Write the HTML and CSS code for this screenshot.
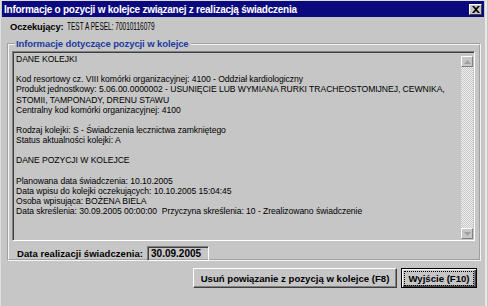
FILE: index.html
```
<!DOCTYPE html>
<html>
<head>
<meta charset="utf-8">
<link rel="stylesheet" href="styles.css">
</head>
<body>
<div class="window">
  <div class="titlebar">
    <span class="title">Informacje o pozycji w kolejce związanej z realizacją świadczenia</span>
    <span class="close"><svg width="8" height="7" viewBox="0 0 8 7"><path d="M0 0h2l2 2 2-2h2L5 3.5 8 7H6L4 5 2 7H0l3-3.5z" fill="#000"/></svg></span>
  </div>
  <div class="content">
    <div class="patient"><b class="plabel">Oczekujący:</b><span class="pvalue">TEST A PESEL: 70010116079</span></div>
    <fieldset class="group">
      <legend class="legend">Informacje dotyczące pozycji w kolejce</legend>
      <div class="memo">
        <div class="memo-text">
          <div class="ln">DANE KOLEJKI</div>
          <div class="ln"></div>
          <div class="ln">Kod resortowy cz. VIII komórki organizacyjnej: 4100 - Oddział kardiologiczny</div>
          <div class="ln">Produkt jednostkowy: 5.06.00.0000002 - USUNIĘCIE LUB WYMIANA RURKI TRACHEOSTOMIJNEJ, CEWNIKA,</div>
          <div class="ln">STOMII, TAMPONADY, DRENU STAWU</div>
          <div class="ln">Centralny kod komórki organizacyjnej: 4100</div>
          <div class="ln"></div>
          <div class="ln">Rodzaj kolejki: S - Świadczenia lecznictwa zamkniętego</div>
          <div class="ln">Status aktualności kolejki: A</div>
          <div class="ln"></div>
          <div class="ln">DANE POZYCJI W KOLEJCE</div>
          <div class="ln"></div>
          <div class="ln">Planowana data świadczenia: 10.10.2005</div>
          <div class="ln">Data wpisu do kolejki oczekujących: 10.10.2005 15:04:45</div>
          <div class="ln">Osoba wpisująca: BOŻENA BIELA</div>
          <div class="ln">Data skreślenia: 30.09.2005 00:00:00&nbsp; Przyczyna skreślenia: 10 - Zrealizowano świadczenie</div>
        </div>
        <div class="scrollbar">
          <div class="sbtn"><svg width="7" height="4" viewBox="0 0 7 4"><path d="M3.5 0L7 4H0z" fill="#a0a0a0"/></svg></div>
          <div class="track"></div>
          <div class="sbtn"><svg width="7" height="4" viewBox="0 0 7 4"><path d="M0 0h7L3.5 4z" fill="#a0a0a0"/></svg></div>
        </div>
      </div>
      <div class="daterow">
        <span class="datelabel">Data realizacji świadczenia:</span>
        <span class="datebox">30.09.2005</span>
      </div>
    </fieldset>
    <div class="buttons">
      <div class="btn">Usuń powiązanie z pozycją w kolejce (F8)</div>
      <div class="btn default"><span class="focus">Wyjście (F10)</span></div>
    </div>
  </div>
</div>
</body>
</html>
```
FILE: styles.css
```
* { box-sizing: border-box; }
html, body { margin: 0; padding: 0; }
body {
  width: 488px;
  height: 306px;
  background: #c6c6c6;
  font-family: "Liberation Sans", Arial, sans-serif;
  overflow: hidden;
}
.window {
  width: 487px;
  height: 306px;
  background: #c6c6c6;
  border-left: 1px solid #dedede;
  border-top: 1px solid #dedede;
  border-right: 2px solid #e8e8e8;
  padding: 0 1px 0 1px;
  display: flex;
  flex-direction: column;
}
.titlebar {
  height: 16px;
  background: #0a0a7e;
  display: flex;
  align-items: center;
  justify-content: space-between;
  padding: 0 2px 0 2px;
}
.title {
  color: #fff;
  font-weight: bold;
  font-size: 10px;
  letter-spacing: -0.25px;
}
.close {
  width: 13px;
  height: 11px;
  background: #c6c6c6;
  border-top: 1px solid #fff;
  border-left: 1px solid #fff;
  border-right: 1px solid #404040;
  border-bottom: 1px solid #404040;
  display: flex;
  align-items: center;
  justify-content: center;
}
.content {
  flex: 1;
  display: flex;
  flex-direction: column;
  padding: 3px 4px 0 5px;
}
.patient {
  color: #000;
  padding-left: 3px;
  height: 13px;
  display: flex;
  align-items: center;
  white-space: nowrap;
}
.plabel {
  font-size: 9.4px;
  letter-spacing: -0.1px;
}
.pvalue {
  display: inline-block;
  font-size: 10px;
  margin-left: 3px;
  transform: scaleX(0.65);
  transform-origin: 0 50%;
}
.group {
  margin: 6px 0 0 0;
  padding: 2px 4px 0 3px;
  border: 2px groove #f4f4f4;
  height: 222px;
  width: 474px;
  min-width: 0;
}
.legend {
  font-size: 9.5px;
  font-weight: bold;
  color: #1c3b9e;
  padding: 0 2px 0 1px;
  margin-left: 3px;
  line-height: 10px;
  letter-spacing: -0.1px;
}
.memo {
  height: 190px;
  display: flex;
  border-top: 1px solid #808080;
  border-left: 1px solid #808080;
  border-right: 1px solid #fff;
  border-bottom: 1px solid #fff;
  box-shadow: inset 1px 1px 0 #404040;
}
.memo-text {
  flex: 1;
  padding: 2px 0 0 3px;
  font-size: 8.6px;
  color: #000;
  letter-spacing: -0.05px;
}
.ln {
  height: 10.15px;
  line-height: 10.15px;
  white-space: nowrap;
}
.scrollbar {
  width: 12px;
  display: flex;
  flex-direction: column;
  margin: 4px 1px 1px 0;
}
.sbtn {
  height: 11px;
  background: #c6c6c6;
  border-top: 1px solid #fff;
  border-left: 1px solid #fff;
  border-right: 1px solid #808080;
  border-bottom: 1px solid #808080;
  display: flex;
  align-items: center;
  justify-content: center;
}
.track {
  flex: 1;
  background: repeating-conic-gradient(#f0f0f0 0 25%, #c6c6c6 0 50%) 0 0 / 2px 2px;
}
.daterow {
  display: flex;
  align-items: center;
  margin-top: 5px;
  padding-left: 5px;
}
.datelabel {
  font-size: 9.5px;
  font-weight: bold;
  letter-spacing: 0.05px;
}
.datebox {
  margin-left: 4px;
  width: 62px;
  height: 15px;
  font-size: 10px;
  font-weight: bold;
  line-height: 12px;
  padding-left: 3px;
  border-top: 1px solid #808080;
  border-left: 1px solid #808080;
  border-right: 1px solid #fff;
  border-bottom: 1px solid #fff;
  box-shadow: inset 1px 1px 0 #404040;
  padding-top: 1px;
}
.buttons {
  display: flex;
  justify-content: flex-end;
  gap: 4px;
  margin-top: 7px;
  padding-right: 3px;
}
.btn {
  height: 20px;
  width: 204px;
  white-space: nowrap;
  font-size: 9.6px;
  font-weight: bold;
  display: flex;
  align-items: center;
  justify-content: center;
  background: #c6c6c6;
  border-top: 1px solid #fff;
  border-left: 1px solid #fff;
  border-right: 1px solid #404040;
  border-bottom: 1px solid #404040;
  box-shadow: inset -1px -1px 0 #808080;
}
.btn.default {
  border: 1px solid #000;
  box-shadow: inset 1px 1px 0 #fff, inset -1px -1px 0 #404040, inset -2px -2px 0 #808080;
  width: 76px;
}
.focus {
  border: 1px dotted #000;
  padding: 1px 3px;
  line-height: 11px;
}
```
